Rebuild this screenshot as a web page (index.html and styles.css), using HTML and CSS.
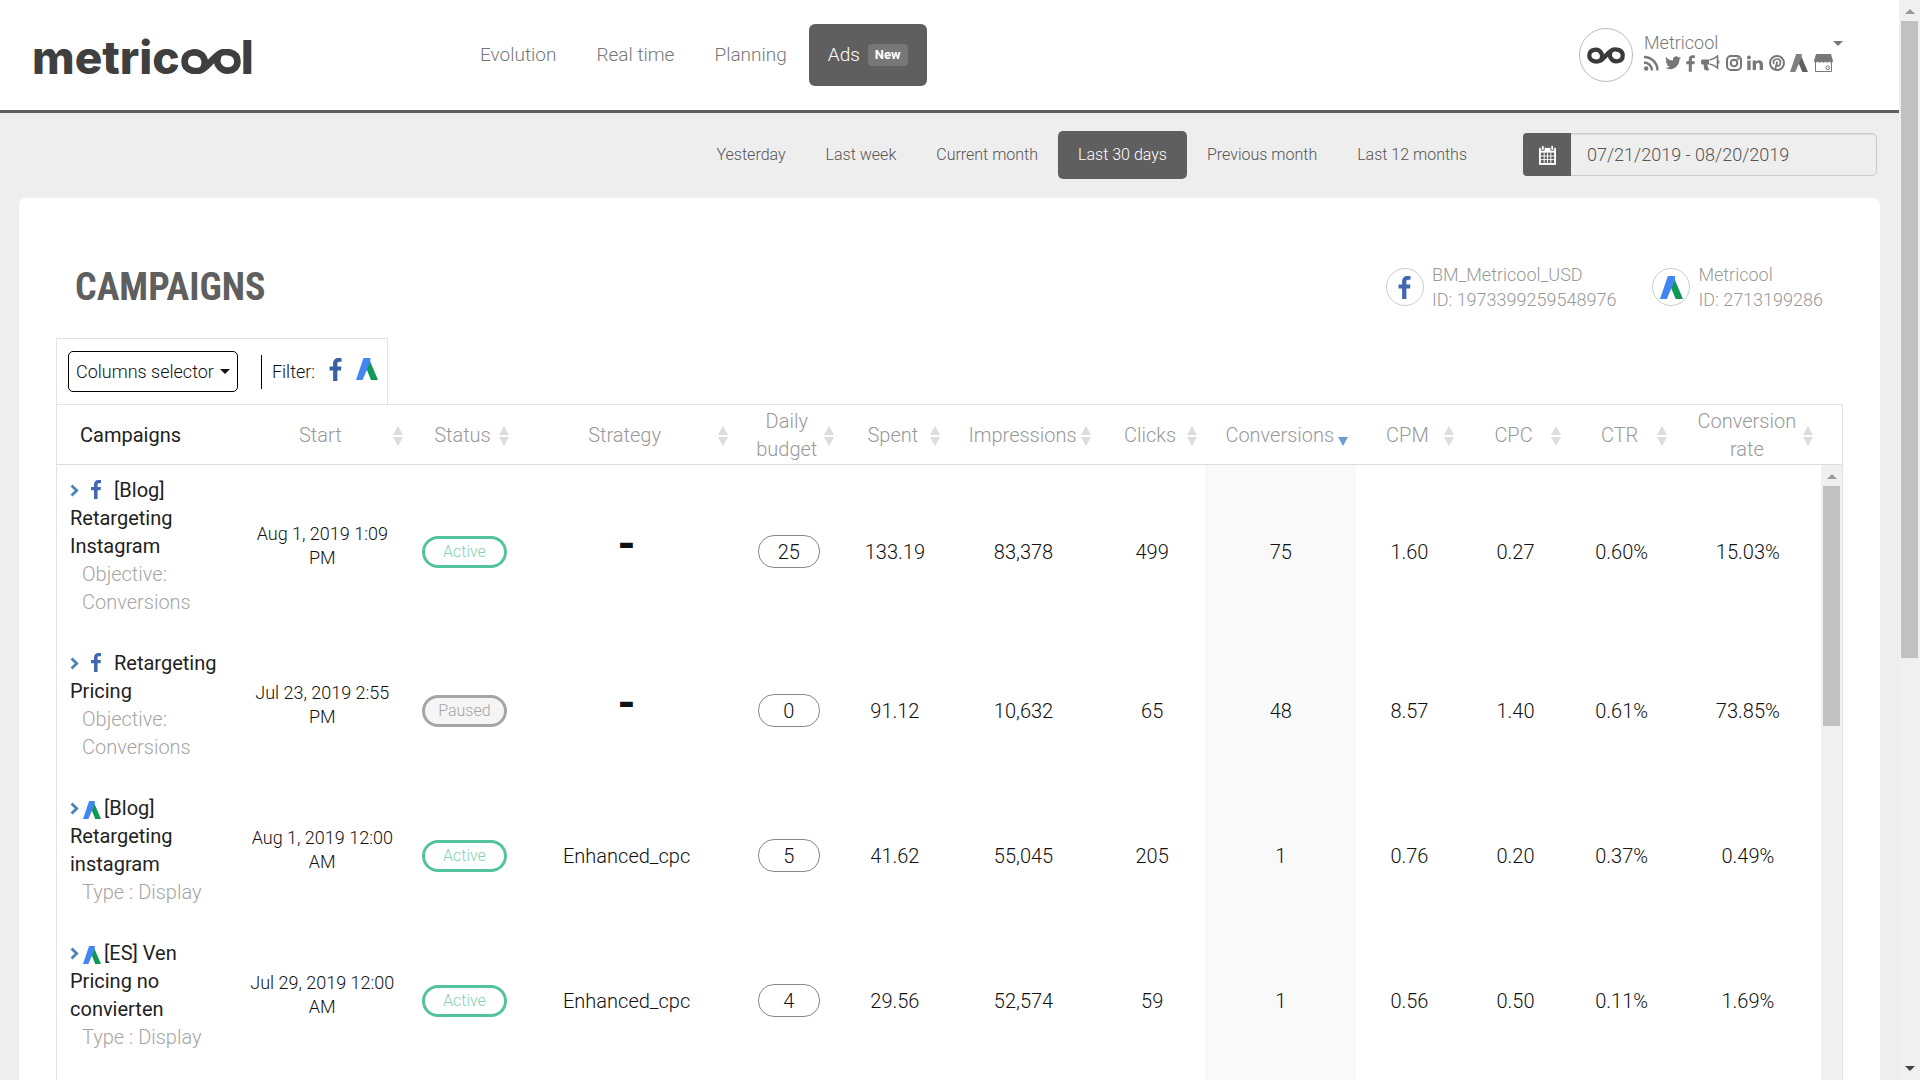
FILE: index.html
```
<!DOCTYPE html>
<html lang="en">
  <head>
    <meta charset="UTF-8" />
    <meta name="viewport" content="width=device-width, initial-scale=1.0" />
    <title>Metricool - Campaigns</title>
    <link rel="stylesheet" href="styles.css">
  </head>
  <body>
    <!-- shared icons -->
    <svg class="sprite" aria-hidden="true">
      <symbol id="facebook" viewBox="0 0 12 22"><path d="M11.8 0.2v3.5h-2.100c-1.600 0-1.900 0.800-1.900 1.900v2.500h3.900l-0.500 3.900h-3.400V22H3.700V12H0.300V8.100h3.400V5.200C3.700 1.800 5.800 0 8.800 0c1.400 0 2.700 0.100 3 0.200z"/></symbol>
      <symbol id="adwords" viewBox="0 0 22 22"><path class="ads-right" d="M13.500 2L22 22h-7L9.500 8.500z"/><path class="ads-left" d="M7.500 0h7L14 4.500 6.500 22H0z"/></symbol>
      <symbol id="chevron" viewBox="0 0 9 13"><path d="M1.500 1.500L6.700 6.500 1.500 11.500" fill="none" stroke="currentColor" stroke-width="2.800"/></symbol>
      <symbol id="infinity" viewBox="0 0 58 24"><path d="M33 8C30 11 25 17 21 19.500C16 22.500 3.500 22 3.500 12C3.500 1.500 18 0.500 22 8.500C24 12.500 23 16 21 19.500M25 16C28 13 33 7 37 4.500C42 1.500 54.500 2 54.500 12C54.500 22.500 40 23.500 36 15.500C34 11.500 35 8 37 4.500" fill="none" stroke="currentColor" stroke-width="6.500"/></symbol>
    </svg>

    <div class="window">
      <div class="page">
        <header class="header">
          <a class="logo" href="#" aria-label="metricool">metric<svg><use href="#infinity"/></svg>l</a>
          <nav class="nav">
            <a href="#">Evolution</a>
            <a href="#">Real time</a>
            <a href="#">Planning</a>
            <a href="#" class="active">Ads <span class="badge">New</span></a>
          </nav>
          <div class="profile">
            <div class="avatar"><svg><use href="#infinity"/></svg></div>
            <div class="profile-info">
              <div class="profile-name">Metricool</div>
              <div class="networks">
                <svg width="15" height="16" viewBox="0 0 15 16"><circle cx="2.200" cy="13.500" r="2.200"/><path d="M0 7.500c4.500 0 8 3.500 8 8M0 2c7.500 0 13.500 6 13.500 13.500" fill="none" stroke="currentColor" stroke-width="2.400"/></svg>
                <svg width="16" height="16" viewBox="0 0 24 20"><path d="M24 2.400c-0.900 0.400-1.800 0.700-2.800 0.800 1-0.600 1.800-1.600 2.200-2.700-1 0.600-2 1-3.100 1.200a4.900 4.900 0 0 0-8.400 4.500C7.700 6 4.100 4 1.700 0.900 0.400 3.100 1 6 3.200 7.500c-0.800 0-1.600-0.200-2.200-0.600 0 2.300 1.600 4.400 3.900 4.900-0.700 0.200-1.500 0.200-2.200 0.100 0.600 2 2.400 3.400 4.600 3.400A9.900 9.900 0 0 1 0 17.300 14 14 0 0 0 7.500 19.500c9.100 0 14.300-7.700 14-14.600 1-0.700 1.800-1.600 2.500-2.500z"/></svg>
                <svg width="9" height="17"><use href="#facebook"/></svg>
                <svg width="19" height="16" viewBox="0 0 19 16"><path d="M1 4.500h7v5H6.500c0 2 0.500 3.500 1.800 5-1.200 1.500-4 1.200-4.800 0.200-0.700-2-1-3.500-0.700-5.200H1c-1.300-1-1.300-4 0-5z"/><path d="M8.500 5C12 4.500 14.500 3 16.500 1v12c-2-2-4.500-3.500-8-4M17.500 5.500v3" fill="none" stroke="currentColor" stroke-width="1.600"/></svg>
                <svg class="outline" width="16" height="16" viewBox="0 0 16 16"><rect x="1" y="1" width="14" height="14" rx="4"/><circle cx="8" cy="8" r="3.300"/><circle cx="12" cy="4" r="0.400"/></svg>
                <svg width="16" height="16" viewBox="0 0 16 16"><circle cx="1.900" cy="2.400" r="1.900"/><path d="M0.300 5.500h3.300V15H0.300zM5.700 5.500h3.200v1.300C10.500 4.400 16 4.500 16 9.500V15h-3.300V10c0-3-3.700-2.700-3.700 0v5H5.700z"/></svg>
                <svg width="16" height="16" viewBox="0 0 16 16"><circle cx="8" cy="8" r="7" fill="none" stroke="currentColor" stroke-width="2"/><path d="M5 9C3.500 6 5.500 4 8.200 4c4.500 0 4 7 0.800 6.800-0.700 0-1.200-0.400-1.400-0.800M8.200 6.500L6.300 14" fill="none" stroke="currentColor" stroke-width="1.700"/></svg>
                <svg class="mono" width="18" height="18"><use href="#adwords"/></svg>
                <svg width="19" height="18" viewBox="0 0 19 18"><path d="M2 0h15l2 7c-0.500 2-3.200 2-4 0.500-1 1.500-3 1.500-3.800 0-0.800 1.500-3 1.500-3.600 0-1 1.500-3 1.500-3.800 0C3 9 0.500 9 0 7z"/><path d="M1.500 8v9.500h16V8" fill="none" stroke="currentColor"/><path d="M15.500 12.500c-1.500-1.500-3.700-0.500-3.700 1.300s2.200 2.600 3.700 1.200v-1.200h-1.700" fill="none" stroke="currentColor"/></svg>
              </div>
            </div>
            <button type="button" class="menu-btn" aria-label="Account menu"><span class="caret"></span></button>
          </div>
        </header>

        <div class="periods">
          <button type="button">Yesterday</button>
          <button type="button">Last week</button>
          <button type="button">Current month</button>
          <button type="button" class="active">Last 30 days</button>
          <button type="button">Previous month</button>
          <button type="button">Last 12 months</button>
          <div class="datepicker">
            <label for="dateRange" aria-label="Date range">
              <svg width="17" height="20" viewBox="0 0 18 21"><path d="M0 3h18v18H0z" fill="#fff"/><path d="M2.500 0.500h3v5h-3zM12.500 0.500h3v5h-3z" fill="#fff" stroke="#5f5f5f"/><path d="M2 8h14v11H2z" fill="#5f5f5f"/><path d="M5.500 8v11M9 8v11M12.500 8v11M2 11.600h14M2 15.400h14" stroke="#fff"/></svg>
            </label>
            <input type="text" id="dateRange" value="07/21/2019 - 08/20/2019" />
          </div>
        </div>

        <main class="card">
          <div class="card-head">
            <h1>CAMPAIGNS</h1>
            <div class="accounts">
              <div class="account">
                <span class="account-icon"><svg class="fb" width="13" height="23"><use href="#facebook"/></svg></span>
                <div>BM_Metricool_USD<br>ID: 1973399259548976</div>
              </div>
              <div class="account">
                <span class="account-icon"><svg width="23" height="23"><use href="#adwords"/></svg></span>
                <div>Metricool<br>ID: 2713199286</div>
              </div>
            </div>
          </div>

          <div class="toolbar">
            <button type="button" class="columns-btn">Columns selector <span class="caret"></span></button>
            <div class="filter">
              <span>Filter:</span>
              <button type="button" aria-label="Facebook"><svg class="fb" width="13" height="23"><use href="#facebook"/></svg></button>
              <button type="button" aria-label="Google Ads"><svg width="22" height="22"><use href="#adwords"/></svg></button>
            </div>
          </div>

          <div class="table-box">
            <table class="campaigns">
              <colgroup>
                <col class="col-name"><col class="col-start"><col class="col-s"><col class="col-strategy"><col class="col-s"><col class="col-s"><col class="col-wide"><col class="col-s"><col class="col-wide"><col class="col-s"><col class="col-s"><col class="col-s"><col class="col-rate">
              </colgroup>
              <thead>
                <tr>
                  <th class="first">Campaigns</th>
                  <th class="sort">Start</th>
                  <th class="sort">Status</th>
                  <th class="sort">Strategy</th>
                  <th class="sort">Daily budget</th>
                  <th class="sort">Spent</th>
                  <th class="sort">Impressions</th>
                  <th class="sort">Clicks</th>
                  <th class="sort desc">Conversions</th>
                  <th class="sort">CPM</th>
                  <th class="sort">CPC</th>
                  <th class="sort">CTR</th>
                  <th class="sort">Conversion rate</th>
                </tr>
              </thead>
              <tbody>
                <tr>
                  <td class="name"><svg class="chev"><use href="#chevron"/></svg><svg class="fb"><use href="#facebook"/></svg><a href="#">[Blog] Retargeting Instagram</a><div>Objective: Conversions</div></td>
                  <td class="start">Aug 1, 2019 1:09 PM</td>
                  <td><span class="status">Active</span></td>
                  <td class="none">-</td>
                  <td><input class="budget" type="text" value="25" aria-label="Daily budget" /></td>
                  <td>133.19</td>
                  <td>83,378</td>
                  <td>499</td>
                  <td class="sorted">75</td>
                  <td>1.60</td>
                  <td>0.27</td>
                  <td>0.60%</td>
                  <td>15.03%</td>
                </tr>
                <tr>
                  <td class="name"><svg class="chev"><use href="#chevron"/></svg><svg class="fb"><use href="#facebook"/></svg><a href="#">Retargeting Pricing</a><div>Objective: Conversions</div></td>
                  <td class="start">Jul 23, 2019 2:55 PM</td>
                  <td><span class="status paused">Paused</span></td>
                  <td class="none">-</td>
                  <td><input class="budget" type="text" value="0" aria-label="Daily budget" /></td>
                  <td>91.12</td>
                  <td>10,632</td>
                  <td>65</td>
                  <td class="sorted">48</td>
                  <td>8.57</td>
                  <td>1.40</td>
                  <td>0.61%</td>
                  <td>73.85%</td>
                </tr>
                <tr>
                  <td class="name"><svg class="chev"><use href="#chevron"/></svg><svg class="ads"><use href="#adwords"/></svg><a href="#">[Blog] Retargeting instagram</a><div>Type : Display</div></td>
                  <td class="start">Aug 1, 2019 12:00 AM</td>
                  <td><span class="status">Active</span></td>
                  <td>Enhanced_cpc</td>
                  <td><input class="budget" type="text" value="5" aria-label="Daily budget" /></td>
                  <td>41.62</td>
                  <td>55,045</td>
                  <td>205</td>
                  <td class="sorted">1</td>
                  <td>0.76</td>
                  <td>0.20</td>
                  <td>0.37%</td>
                  <td>0.49%</td>
                </tr>
                <tr>
                  <td class="name"><svg class="chev"><use href="#chevron"/></svg><svg class="ads"><use href="#adwords"/></svg><a href="#">[ES] Ven Pricing no convierten</a><div>Type : Display</div></td>
                  <td class="start">Jul 29, 2019 12:00 AM</td>
                  <td><span class="status">Active</span></td>
                  <td>Enhanced_cpc</td>
                  <td><input class="budget" type="text" value="4" aria-label="Daily budget" /></td>
                  <td>29.56</td>
                  <td>52,574</td>
                  <td>59</td>
                  <td class="sorted">1</td>
                  <td>0.56</td>
                  <td>0.50</td>
                  <td>0.11%</td>
                  <td>1.69%</td>
                </tr>
                <tr class="filler"><td colspan="8"></td><td class="sorted"></td><td colspan="4"></td></tr>
              </tbody>
            </table>
            <div class="table-side">
              <div class="scrollbar">
                <span class="arrow up"></span>
                <span class="thumb"></span>
              </div>
            </div>
          </div>
        </main>
      </div>

      <div class="scrollbar window-scroll">
        <span class="arrow up"></span>
        <span class="thumb"></span>
        <span class="arrow down"></span>
      </div>
    </div>
  </body>
</html>
```

FILE: styles.css
```
* {
  box-sizing: border-box;
}
body {
  margin: 0;
  font-family: Roboto, "Liberation Sans", sans-serif;
  font-weight: 300;
  font-size: 20px;
  line-height: 28px;
  color: #111;
  background-color: #eee;
}
a {
  color: inherit;
  text-decoration: none;
}
button, input {
  font: inherit;
  color: inherit;
}
button {
  background: none;
  border: none;
  padding: 0;
  cursor: pointer;
}
svg {
  fill: currentColor;
  flex: none;
}
.sprite {
  position: absolute;
  width: 0;
  height: 0;
}
.ads-left {
  fill: var(--ads-left, #4285f4);
}
.ads-right {
  fill: var(--ads-right, #109855);
}
.mono {
  --ads-left: #808080;
  --ads-right: #606060;
}
.outline {
  fill: none;
  stroke: currentColor;
  stroke-width: 2px;
}
.fb {
  color: #4267b2;
}
.window {
  display: flex;
  height: 100vh;
  overflow: hidden;
}
.page {
  flex: 1;
  display: flex;
  flex-direction: column;
}

/* header */
.header {
  display: flex;
  align-items: center;
  height: 113px;
  flex: none;
  padding: 0 56px 0 32px;
  background-color: #fff;
  border-bottom: 3px solid #5f5f5f;
  color: #777;
}
.logo {
  display: flex;
  align-items: baseline;
  width: 428px;
  padding-top: 4px;
  font-family: Inter, sans-serif;
  font-weight: 800;
  font-size: 46px;
  line-height: 48px;
  color: #3f3f3f;
}
.logo svg {
  width: 60px;
  height: 25px;
  margin-left: 1px;
}
.nav {
  display: flex;
  align-items: center;
  font-size: 19px;
}
.nav a {
  display: flex;
  align-items: center;
  gap: 8px;
  height: 62px;
  padding: 0 20px;
}
.nav .active {
  padding: 0 19px;
  background-color: #5f5f5f;
  color: #fff;
  border-radius: 6px;
  margin-left: 2px;
}
.badge {
  padding: 0 7px;
  border-radius: 4px;
  background-color: #777;
  font-size: 13px;
  font-weight: 700;
  line-height: 22px;
}
.profile {
  display: flex;
  align-items: center;
  margin-left: auto;
}
.avatar {
  display: flex;
  align-items: center;
  justify-content: center;
  width: 54px;
  height: 54px;
  margin-right: 11px;
  border: 1px solid #bbb;
  border-radius: 50%;
  color: #3a3a3a;
}
.avatar svg {
  width: 38px;
  height: 17px;
}
.profile-info {
  padding-bottom: 6px;
}
.profile-name {
  font-size: 18px;
  line-height: 22px;
}
.networks {
  display: flex;
  align-items: center;
  justify-content: space-between;
  width: 189px;
  height: 18px;
}
.caret {
  display: inline-block;
  border: 5px solid transparent;
  border-top-color: currentColor;
  border-bottom: none;
}
.menu-btn {
  display: flex;
  margin-bottom: 24px;
}

/* date range */
.periods {
  display: flex;
  align-items: center;
  justify-content: flex-end;
  flex: none;
  height: 85px;
  padding: 0 22px 2px 0;
  font-size: 16px;
  color: #555;
}
.periods button {
  height: 48px;
  padding: 0 20px;
}
.periods .active {
  background-color: #5f5f5f;
  color: #fff;
  border-radius: 5px;
}
.datepicker {
  display: flex;
  width: 354px;
  height: 43px;
  margin-left: 36px;
  font-size: 18px;
}
.datepicker label {
  display: flex;
  align-items: center;
  justify-content: center;
  width: 48px;
  background-color: #5f5f5f;
  border-radius: 4px 0 0 4px;
}
.datepicker input {
  flex: 1;
  min-width: 0;
  padding: 0 16px;
  border: 1px solid #ccc;
  border-left: none;
  border-radius: 0 5px 5px 0;
  background-color: #eee;
  box-shadow: inset 0 1px 1px rgba(0, 0, 0, 0.08);
}

/* campaigns card */
.card {
  flex: 1;
  display: flex;
  flex-direction: column;
  min-height: 0;
  margin: 0 19px;
  padding: 0 37px;
  background-color: #fff;
  border-radius: 6px 6px 0 0;
}
.card-head {
  display: flex;
  flex: none;
  align-items: center;
  justify-content: space-between;
  height: 140px;
  padding: 38px 20px 0 19px;
}
h1 {
  margin: 0;
  font-family: "Liberation Sans Narrow", "Roboto Condensed", "Liberation Sans", sans-serif;
  font-size: 38px;
  color: #5f5f5f;
}
.accounts {
  display: flex;
  gap: 36px;
  font-size: 18px;
  line-height: 25px;
  color: #999;
}
.account {
  display: flex;
  align-items: center;
  gap: 8px;
}
.account-icon {
  display: flex;
  align-items: center;
  justify-content: center;
  width: 38px;
  height: 38px;
  border: 1px solid #ccc;
  border-radius: 50%;
}
.toolbar {
  display: flex;
  flex: none;
  align-items: center;
  align-self: flex-start;
  height: 66px;
  padding: 0 9px 0 11px;
  border: 1px solid #e3e3e3;
  border-bottom: none;
  font-size: 18px;
}
.columns-btn {
  display: flex;
  align-items: center;
  gap: 6px;
  height: 41px;
  padding: 0 7px;
  border: 1px solid #000;
  border-radius: 5px;
}
.filter {
  display: flex;
  align-items: center;
  gap: 14px;
  height: 34px;
  margin-left: 23px;
  padding-left: 10px;
  border-left: 1px solid #000;
}
.filter button {
  display: flex;
  margin-bottom: 5px;
}
.filter .fb {
  color: #3763a6;
}
.table-box {
  flex: 1;
  display: flex;
  align-items: flex-start;
  min-height: 0;
  overflow: hidden;
  border: 1px solid #e3e3e3;
  border-bottom: none;
}
.campaigns {
  flex: 1;
  table-layout: fixed;
  border-collapse: separate;
  border-spacing: 0;
}
.col-name {
  width: 176px;
}
.col-start {
  width: 178px;
}
.col-s {
  width: 106px;
}
.col-strategy {
  width: 218px;
}
.col-wide {
  width: 151px;
}
.col-rate {
  width: 146px;
}
th {
  position: relative;
  height: 60px;
  padding: 0 22px 0 18px;
  font-weight: 300;
  color: #999;
  border-bottom: 1px solid #ddd;
}
th.first {
  padding-left: 23px;
  text-align: left;
  font-weight: 400;
  color: #222;
}
/* sort arrows sit at the right edge of the header cell */
.sort::before, .sort::after {
  content: "";
  position: absolute;
  right: 8px;
  border: 5px solid transparent;
}
.sort::before {
  top: 21px;
  border-top: none;
  border-bottom: 9px solid #ddd;
}
.sort::after {
  top: 32px;
  border-bottom: none;
  border-top: 9px solid #ddd;
}
.desc::before {
  display: none;
}
.desc::after {
  border-top-color: #6f9bd1;
}
th:nth-child(7), th:nth-child(9), th:last-child {
  padding: 0 16px 0 14px;
}
td {
  padding: 16px 4px;
  text-align: center;
}
td.name {
  padding: 11px 10px 22px 13px;
  text-align: left;
}
.name a {
  font-weight: 400;
  color: #222;
}
.name div {
  padding-left: 12px;
  color: #a5a5a5;
}
.name .chev {
  width: 9px;
  height: 13px;
  color: #4a83b5;
}
.name .fb {
  width: 12px;
  height: 19px;
  margin: 0 12px 0 11px;
  vertical-align: -2px;
}
.name .ads {
  width: 18px;
  height: 18px;
  margin: 0 3px 0 4px;
  vertical-align: -4px;
}
td.start {
  padding: 11px 14px 22px;
  font-size: 18px;
  line-height: 24px;
}
.status {
  display: block;
  width: 85px;
  margin: 0 auto;
  border: 3px solid #52c39d;
  border-radius: 16px;
  font-size: 16px;
  line-height: 26px;
  color: #85cfb2;
}
.paused {
  border-color: #a5a5a5;
  background-color: #f5f5f5;
  color: #a5a5a5;
}
td.none {
  padding: 8px 4px 24px;
  font-size: 46px;
  font-weight: 700;
}
.budget {
  display: block;
  width: 62px;
  height: 33px;
  margin: 0 auto;
  padding: 0;
  border: 1px solid #888;
  border-radius: 16px;
  background-color: #fff;
  text-align: center;
}
.sorted {
  background-color: #f9f9f9;
}
.filler td {
  height: 140px;
}

/* scrollbars */
.table-side {
  display: flex;
  align-self: stretch;
  width: 21px;
  padding-top: 59px;
}
.scrollbar {
  display: flex;
  flex-direction: column;
  align-items: center;
  flex: 1;
  background-color: #f0f0f0;
  border-top: 1px solid #ddd;
}
.scrollbar .thumb {
  width: 17px;
  height: 240px;
  background-color: #c1c1c1;
}
.arrow {
  border: 5px solid transparent;
}
.up {
  margin: 9px 0 7px;
  border-top: none;
  border-bottom-color: #999;
}
.down {
  margin-top: auto;
  margin-bottom: 9px;
  border-bottom: none;
  border-top-color: #444;
}
.window-scroll {
  flex: none;
  width: 21px;
  border-top: none;
}
.window-scroll .thumb {
  height: 59%;
}
```
